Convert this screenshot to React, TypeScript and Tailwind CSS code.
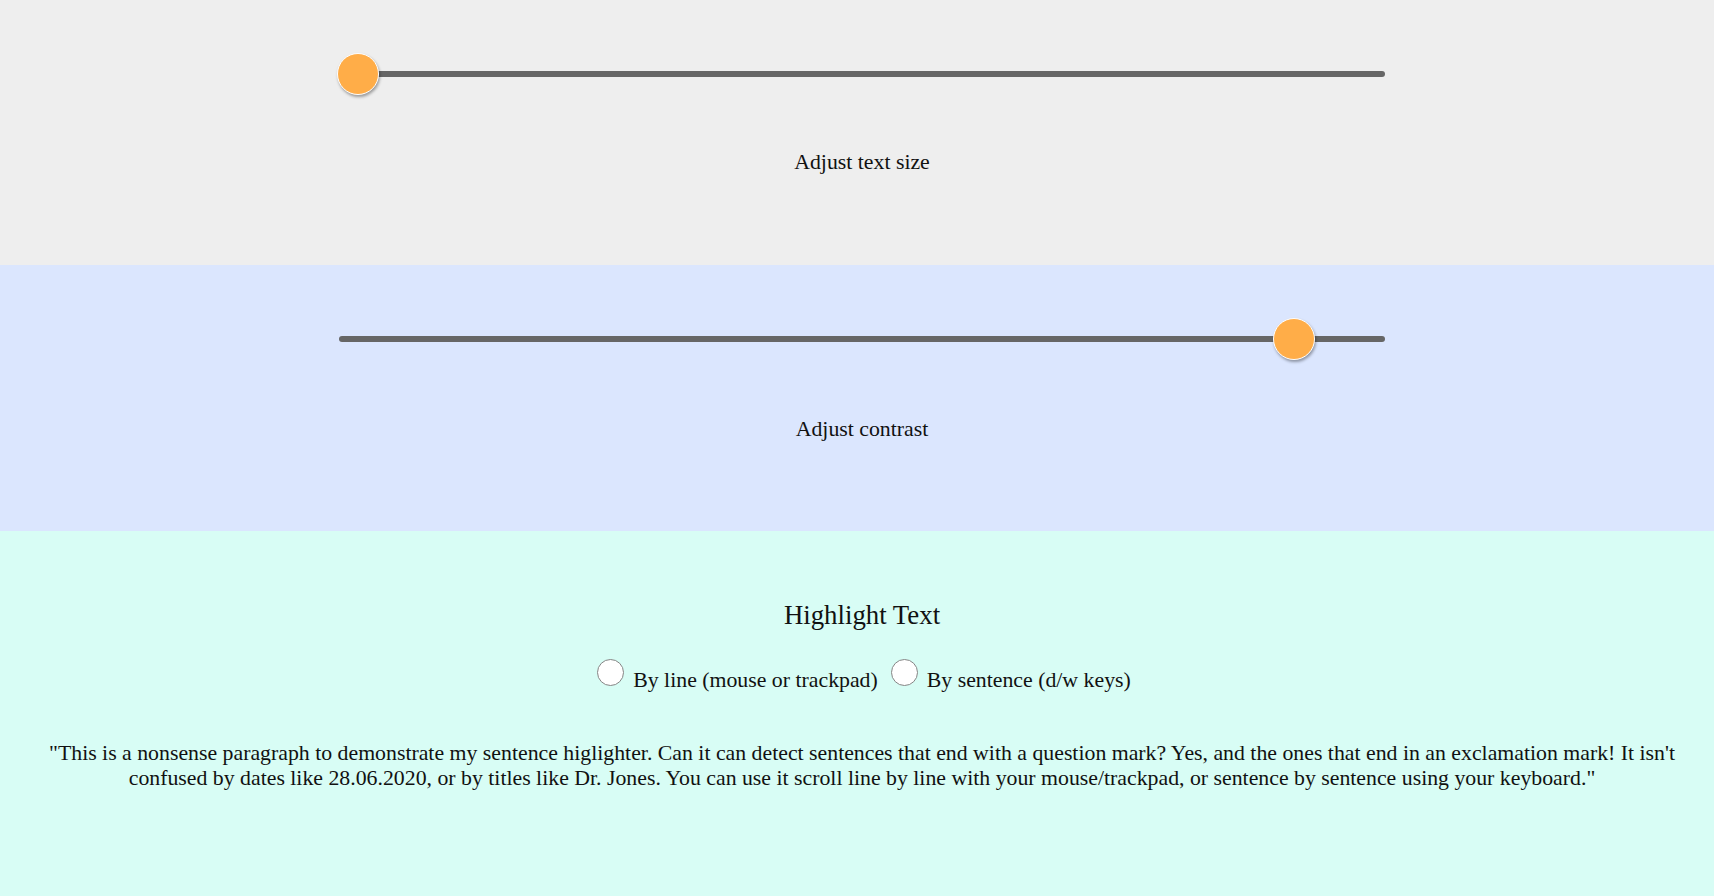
import React from "react";

const serif = { fontFamily: '"Liberation Serif", "Times New Roman", serif' };

type SliderProps = {
  value: number; // 0..1
};

// simple static slider: grey track + orange thumb
function Slider({ value }: SliderProps) {
  return (
    <div className="relative flex h-[42px] w-[1046px] items-center">
      <div className="h-[6px] w-full rounded-full bg-[#666666]" />
      <div
        className="absolute top-0 h-[42px] w-[42px] rounded-full border border-white bg-[#ffad48] shadow-[1px_2px_3px_rgba(0,0,0,0.35)]"
        style={{ left: `calc(${value * 100}% - ${value * 40 + 2}px)` }}
      />
    </div>
  );
}

function Radio({ label }: { label: string }) {
  return (
    <label className="flex items-center">
      <span className="h-[27px] w-[27px] -translate-y-2 rounded-full border-[1.5px] border-[#858585] bg-white" />
      <span className="ml-[9px]">{label}</span>
    </label>
  );
}

export default function App() {
  return (
    <div className="min-h-[896px] text-[21.8px] leading-[25px] text-[#111111]" style={serif}>
      <section className="flex h-[265px] flex-col items-center bg-[#eeeeee] pl-[10px] pt-[53px]">
        <Slider value={0} />
        <p className="mt-[55px]">Adjust text size</p>
      </section>

      <section className="flex h-[266px] flex-col items-center bg-[#dbe6fe] pl-[10px] pt-[53px]">
        <Slider value={0.93} />
        <p className="mt-[57px]">Adjust contrast</p>
      </section>

      <section className="flex min-h-[365px] flex-col items-center bg-[#d8fdf5] pt-[69px]">
        <h3 className="pl-[10px] text-[26.8px] leading-[30px]">Highlight Text</h3>
        <div className="mt-[37px] flex items-center gap-[13px] pl-[14px]">
          <Radio label="By line (mouse or trackpad)" />
          <Radio label="By sentence (d/w keys)" />
        </div>
        <p className="mt-[47px] pl-[35px] pr-[25px] text-center">
          "This is a nonsense paragraph to demonstrate my sentence higlighter. Can it can detect
          sentences that end with a question mark? Yes, and the ones that end in an exclamation
          mark! It isn't confused by dates like 28.06.2020, or by titles like Dr. Jones. You can
          use it scroll line by line with your mouse/trackpad, or sentence by sentence using your
          keyboard."
        </p>
      </section>
    </div>
  );
}
